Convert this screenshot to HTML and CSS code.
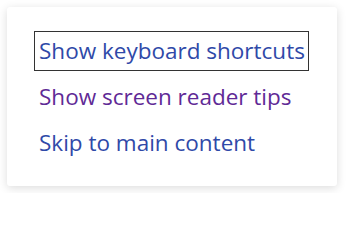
FILE: index.html
```html
<!DOCTYPE html>
<html>
<head>
<meta charset="utf-8">
<link rel="stylesheet" href="styles.css">
</head>
<body>
<div class="card">
  <ul class="links">
    <li><a class="link focused" href="#">Show keyboard shortcuts</a></li>
    <li><a class="link visited" href="#">Show screen reader tips</a></li>
    <li><a class="link" href="#">Skip to main content</a></li>
  </ul>
</div>
</body>
</html>
```
FILE: styles.css
```css
html, body {
  margin: 0;
  padding: 0;
  background: #ffffff;
}
body {
  font-family: "Open Sans", "Noto Sans", sans-serif;
}
.card {
  margin: 7px;
  width: 330px;
  height: 179px;
  box-sizing: border-box;
  background: #ffffff;
  border-radius: 3px;
  box-shadow: 0 2px 10px rgba(0, 0, 0, 0.14);
  padding: 24px 0 0 27px;
}
.links {
  list-style: none;
  margin: 0;
  padding: 0;
  display: flex;
  flex-direction: column;
  gap: 6px;
}
.link {
  display: inline-block;
  font-size: 22.5px;
  line-height: 38px;
  padding: 0 3px 0 4px;
  color: #2f49a8;
  text-decoration: none;
  border: 1px solid transparent;
}
.link.visited {
  color: #5f2a96;
}
.link.focused {
  border-color: #333333;
}
```
